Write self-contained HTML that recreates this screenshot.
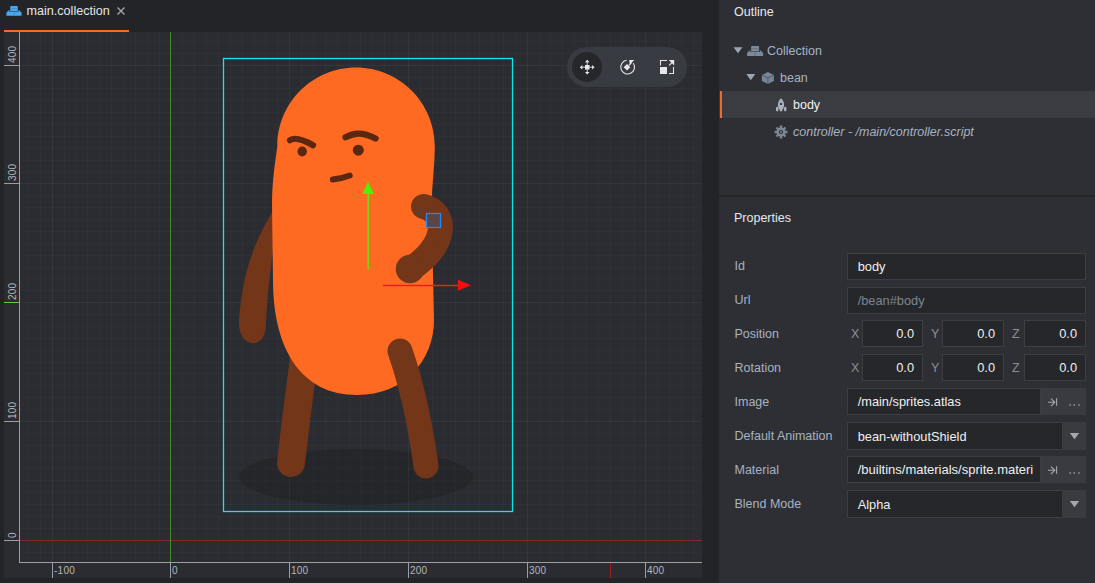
<!DOCTYPE html>
<html><head><meta charset="utf-8">
<style>
*{margin:0;padding:0;box-sizing:border-box}
html,body{width:1095px;height:583px;overflow:hidden;background:#222428;font-family:"Liberation Sans",sans-serif;}
.abs{position:absolute}
svg text.rt{font-family:"Liberation Sans",sans-serif;font-size:10px;letter-spacing:0.25px;fill:#b4b6ba}
.t{position:absolute;white-space:nowrap;font-size:12.5px;line-height:16px}
.panel{position:absolute;left:719px;top:0;width:376px;height:583px;background:#2e2f34}
.lbl{color:#a6b3c2}
.field{position:absolute;background:#26272b;border:1px solid #3c3e43}
.fv{position:absolute;white-space:nowrap;font-size:12.8px;color:#efefef;line-height:16px}
.btn{position:absolute;background:#393b40}
</style></head><body>
<svg class="abs" style="left:0;top:0" width="1095" height="583" viewBox="0 0 1095 583">
<rect x="4" y="32" width="698" height="546" fill="#2b2c31"/>
<rect x="28" y="32" width="1" height="530" fill="#fff" fill-opacity="0.02"/>
<rect x="40" y="32" width="1" height="530" fill="#fff" fill-opacity="0.02"/>
<rect x="52" y="32" width="1" height="530" fill="#fff" fill-opacity="0.052"/>
<rect x="64" y="32" width="1" height="530" fill="#fff" fill-opacity="0.02"/>
<rect x="75" y="32" width="1" height="530" fill="#fff" fill-opacity="0.02"/>
<rect x="87" y="32" width="1" height="530" fill="#fff" fill-opacity="0.02"/>
<rect x="99" y="32" width="1" height="530" fill="#fff" fill-opacity="0.02"/>
<rect x="111" y="32" width="1" height="530" fill="#fff" fill-opacity="0.02"/>
<rect x="123" y="32" width="1" height="530" fill="#fff" fill-opacity="0.02"/>
<rect x="135" y="32" width="1" height="530" fill="#fff" fill-opacity="0.02"/>
<rect x="147" y="32" width="1" height="530" fill="#fff" fill-opacity="0.02"/>
<rect x="159" y="32" width="1" height="530" fill="#fff" fill-opacity="0.02"/>
<rect x="170" y="32" width="1" height="530" fill="#fff" fill-opacity="0.052"/>
<rect x="182" y="32" width="1" height="530" fill="#fff" fill-opacity="0.02"/>
<rect x="194" y="32" width="1" height="530" fill="#fff" fill-opacity="0.02"/>
<rect x="206" y="32" width="1" height="530" fill="#fff" fill-opacity="0.02"/>
<rect x="218" y="32" width="1" height="530" fill="#fff" fill-opacity="0.02"/>
<rect x="230" y="32" width="1" height="530" fill="#fff" fill-opacity="0.02"/>
<rect x="242" y="32" width="1" height="530" fill="#fff" fill-opacity="0.02"/>
<rect x="254" y="32" width="1" height="530" fill="#fff" fill-opacity="0.02"/>
<rect x="265" y="32" width="1" height="530" fill="#fff" fill-opacity="0.02"/>
<rect x="277" y="32" width="1" height="530" fill="#fff" fill-opacity="0.02"/>
<rect x="289" y="32" width="1" height="530" fill="#fff" fill-opacity="0.052"/>
<rect x="301" y="32" width="1" height="530" fill="#fff" fill-opacity="0.02"/>
<rect x="313" y="32" width="1" height="530" fill="#fff" fill-opacity="0.02"/>
<rect x="325" y="32" width="1" height="530" fill="#fff" fill-opacity="0.02"/>
<rect x="337" y="32" width="1" height="530" fill="#fff" fill-opacity="0.02"/>
<rect x="349" y="32" width="1" height="530" fill="#fff" fill-opacity="0.02"/>
<rect x="360" y="32" width="1" height="530" fill="#fff" fill-opacity="0.02"/>
<rect x="372" y="32" width="1" height="530" fill="#fff" fill-opacity="0.02"/>
<rect x="384" y="32" width="1" height="530" fill="#fff" fill-opacity="0.02"/>
<rect x="396" y="32" width="1" height="530" fill="#fff" fill-opacity="0.02"/>
<rect x="408" y="32" width="1" height="530" fill="#fff" fill-opacity="0.052"/>
<rect x="420" y="32" width="1" height="530" fill="#fff" fill-opacity="0.02"/>
<rect x="432" y="32" width="1" height="530" fill="#fff" fill-opacity="0.02"/>
<rect x="444" y="32" width="1" height="530" fill="#fff" fill-opacity="0.02"/>
<rect x="455" y="32" width="1" height="530" fill="#fff" fill-opacity="0.02"/>
<rect x="467" y="32" width="1" height="530" fill="#fff" fill-opacity="0.02"/>
<rect x="479" y="32" width="1" height="530" fill="#fff" fill-opacity="0.02"/>
<rect x="491" y="32" width="1" height="530" fill="#fff" fill-opacity="0.02"/>
<rect x="503" y="32" width="1" height="530" fill="#fff" fill-opacity="0.02"/>
<rect x="515" y="32" width="1" height="530" fill="#fff" fill-opacity="0.02"/>
<rect x="527" y="32" width="1" height="530" fill="#fff" fill-opacity="0.052"/>
<rect x="539" y="32" width="1" height="530" fill="#fff" fill-opacity="0.02"/>
<rect x="550" y="32" width="1" height="530" fill="#fff" fill-opacity="0.02"/>
<rect x="562" y="32" width="1" height="530" fill="#fff" fill-opacity="0.02"/>
<rect x="574" y="32" width="1" height="530" fill="#fff" fill-opacity="0.02"/>
<rect x="586" y="32" width="1" height="530" fill="#fff" fill-opacity="0.02"/>
<rect x="598" y="32" width="1" height="530" fill="#fff" fill-opacity="0.02"/>
<rect x="610" y="32" width="1" height="530" fill="#fff" fill-opacity="0.02"/>
<rect x="622" y="32" width="1" height="530" fill="#fff" fill-opacity="0.02"/>
<rect x="634" y="32" width="1" height="530" fill="#fff" fill-opacity="0.02"/>
<rect x="645" y="32" width="1" height="530" fill="#fff" fill-opacity="0.052"/>
<rect x="657" y="32" width="1" height="530" fill="#fff" fill-opacity="0.02"/>
<rect x="669" y="32" width="1" height="530" fill="#fff" fill-opacity="0.02"/>
<rect x="681" y="32" width="1" height="530" fill="#fff" fill-opacity="0.02"/>
<rect x="693" y="32" width="1" height="530" fill="#fff" fill-opacity="0.02"/>
<rect x="19" y="552" width="683" height="1" fill="#fff" fill-opacity="0.02"/>
<rect x="19" y="540" width="683" height="1" fill="#fff" fill-opacity="0.052"/>
<rect x="19" y="528" width="683" height="1" fill="#fff" fill-opacity="0.02"/>
<rect x="19" y="516" width="683" height="1" fill="#fff" fill-opacity="0.02"/>
<rect x="19" y="504" width="683" height="1" fill="#fff" fill-opacity="0.02"/>
<rect x="19" y="492" width="683" height="1" fill="#fff" fill-opacity="0.02"/>
<rect x="19" y="480" width="683" height="1" fill="#fff" fill-opacity="0.02"/>
<rect x="19" y="468" width="683" height="1" fill="#fff" fill-opacity="0.02"/>
<rect x="19" y="457" width="683" height="1" fill="#fff" fill-opacity="0.02"/>
<rect x="19" y="445" width="683" height="1" fill="#fff" fill-opacity="0.02"/>
<rect x="19" y="433" width="683" height="1" fill="#fff" fill-opacity="0.02"/>
<rect x="19" y="421" width="683" height="1" fill="#fff" fill-opacity="0.052"/>
<rect x="19" y="409" width="683" height="1" fill="#fff" fill-opacity="0.02"/>
<rect x="19" y="397" width="683" height="1" fill="#fff" fill-opacity="0.02"/>
<rect x="19" y="385" width="683" height="1" fill="#fff" fill-opacity="0.02"/>
<rect x="19" y="373" width="683" height="1" fill="#fff" fill-opacity="0.02"/>
<rect x="19" y="362" width="683" height="1" fill="#fff" fill-opacity="0.02"/>
<rect x="19" y="350" width="683" height="1" fill="#fff" fill-opacity="0.02"/>
<rect x="19" y="338" width="683" height="1" fill="#fff" fill-opacity="0.02"/>
<rect x="19" y="326" width="683" height="1" fill="#fff" fill-opacity="0.02"/>
<rect x="19" y="314" width="683" height="1" fill="#fff" fill-opacity="0.02"/>
<rect x="19" y="302" width="683" height="1" fill="#fff" fill-opacity="0.052"/>
<rect x="19" y="290" width="683" height="1" fill="#fff" fill-opacity="0.02"/>
<rect x="19" y="278" width="683" height="1" fill="#fff" fill-opacity="0.02"/>
<rect x="19" y="267" width="683" height="1" fill="#fff" fill-opacity="0.02"/>
<rect x="19" y="255" width="683" height="1" fill="#fff" fill-opacity="0.02"/>
<rect x="19" y="243" width="683" height="1" fill="#fff" fill-opacity="0.02"/>
<rect x="19" y="231" width="683" height="1" fill="#fff" fill-opacity="0.02"/>
<rect x="19" y="219" width="683" height="1" fill="#fff" fill-opacity="0.02"/>
<rect x="19" y="207" width="683" height="1" fill="#fff" fill-opacity="0.02"/>
<rect x="19" y="195" width="683" height="1" fill="#fff" fill-opacity="0.02"/>
<rect x="19" y="183" width="683" height="1" fill="#fff" fill-opacity="0.052"/>
<rect x="19" y="172" width="683" height="1" fill="#fff" fill-opacity="0.02"/>
<rect x="19" y="160" width="683" height="1" fill="#fff" fill-opacity="0.02"/>
<rect x="19" y="148" width="683" height="1" fill="#fff" fill-opacity="0.02"/>
<rect x="19" y="136" width="683" height="1" fill="#fff" fill-opacity="0.02"/>
<rect x="19" y="124" width="683" height="1" fill="#fff" fill-opacity="0.02"/>
<rect x="19" y="112" width="683" height="1" fill="#fff" fill-opacity="0.02"/>
<rect x="19" y="100" width="683" height="1" fill="#fff" fill-opacity="0.02"/>
<rect x="19" y="88" width="683" height="1" fill="#fff" fill-opacity="0.02"/>
<rect x="19" y="77" width="683" height="1" fill="#fff" fill-opacity="0.02"/>
<rect x="19" y="65" width="683" height="1" fill="#fff" fill-opacity="0.052"/>
<rect x="19" y="53" width="683" height="1" fill="#fff" fill-opacity="0.02"/>
<rect x="19" y="41" width="683" height="1" fill="#fff" fill-opacity="0.02"/>
<rect x="20" y="540" width="682" height="1" fill="#8a2626"/>
<rect x="170" y="32" width="1" height="530" fill="#3f8c2c"/>
<rect x="19" y="32" width="1" height="531" fill="#9c9ea2"/>
<rect x="19" y="562" width="683" height="1" fill="#9c9ea2"/>
<rect x="52" y="562" width="1" height="16" fill="#9c9ea2"/>
<text x="54" y="574" class="rt">-100</text>
<rect x="170" y="562" width="1" height="16" fill="#9c9ea2"/>
<text x="172" y="574" class="rt">0</text>
<rect x="289" y="562" width="1" height="16" fill="#9c9ea2"/>
<text x="291" y="574" class="rt">100</text>
<rect x="408" y="562" width="1" height="16" fill="#9c9ea2"/>
<text x="410" y="574" class="rt">200</text>
<rect x="527" y="562" width="1" height="16" fill="#9c9ea2"/>
<text x="529" y="574" class="rt">300</text>
<rect x="645" y="562" width="1" height="16" fill="#9c9ea2"/>
<text x="647" y="574" class="rt">400</text>
<rect x="4" y="540" width="15" height="1" fill="#9c9ea2"/>
<text transform="translate(16,538) rotate(-90)" class="rt">0</text>
<rect x="4" y="421" width="15" height="1" fill="#9c9ea2"/>
<text transform="translate(16,419) rotate(-90)" class="rt">100</text>
<rect x="4" y="302" width="15" height="1" fill="#5fcf3f"/>
<text transform="translate(16,300) rotate(-90)" class="rt">200</text>
<rect x="4" y="183" width="15" height="1" fill="#9c9ea2"/>
<text transform="translate(16,181) rotate(-90)" class="rt">300</text>
<rect x="4" y="65" width="15" height="1" fill="#9c9ea2"/>
<text transform="translate(16,63) rotate(-90)" class="rt">400</text>
<rect x="610" y="563" width="1" height="15" fill="#9a1e1e"/>
<g>

<ellipse cx="356" cy="477" rx="117" ry="28" fill="#000" fill-opacity="0.13"/>
<path d="M273 211 C259 234 243 265 239 320 C238 338 248 343 253 343 C262 343 266 335 266 322 C267 300 270 275 273 250 Z" fill="#733619"/>
<path d="M305 352 Q297 410 291 463" stroke="#733619" stroke-width="28" stroke-linecap="round" fill="none"/>
<path d="M273 280 L272 205 C272 180 275.5 160 277.4 146 C277.4 102.6 312.6 67.4 356 67.4 C399.4 67.4 434.8 102.6 434.8 146 C434.8 165 432 185 431.5 205 L434 320 C434 360 405 395 357 395 C302 395 273 350 273 280 Z" fill="#fe6a22"/>
<path d="M290 140.2 C294 137.5 301 138.5 313 145.2" stroke="#5b2711" stroke-width="6.2" stroke-linecap="round" fill="none"/>
<path d="M345.5 137.3 C353 133.5 361 131 375.5 138.5" stroke="#5b2711" stroke-width="6.2" stroke-linecap="round" fill="none"/>
<ellipse cx="302.2" cy="151.5" rx="4.7" ry="5" fill="#5b2711"/>
<circle cx="358.3" cy="150.2" r="5.5" fill="#5b2711"/>
<path d="M332.8 179.4 Q342 178.5 349.7 175.5" stroke="#5b2711" stroke-width="6" stroke-linecap="round" fill="none"/>
<path d="M400 351 Q417 400 426 466" stroke="#733619" stroke-width="25" stroke-linecap="round" fill="none"/>
<path d="M423.5 206.5 C447 212 449 244 410 269.5" stroke="#733619" stroke-width="25" stroke-linecap="round" fill="none"/>
<path d="M440 240 L420 264 L403 262 Z" fill="#733619"/>
<circle cx="410" cy="269" r="14.3" fill="#733619"/>

</g>

<rect x="223.5" y="58.5" width="289" height="453" fill="none" stroke="#10e8e8" stroke-width="1.3"/>
<line x1="368.2" y1="194" x2="368.2" y2="269.5" stroke="#7ad81a" stroke-width="1.5"/>
<path d="M368 181.5 L373.9 194 L362.4 194 Z" fill="#4cf000"/>
<line x1="383" y1="285.4" x2="458" y2="285.4" stroke="#ee1c1c" stroke-width="1.5"/>
<path d="M471.2 285.2 L457.8 279.4 L457.8 290.8 Z" fill="#f01010"/>
<rect x="426.5" y="213.5" width="14" height="14" fill="#5c4444" stroke="#1a8cff" stroke-width="1.3"/>


<rect x="567" y="47" width="120" height="40" rx="20" fill="#393b42"/>
<circle cx="587" cy="67" r="15" fill="#25272b"/>
<g fill="#e8e8ea" stroke="#e8e8ea">
 <rect x="585" y="65" width="4.5" height="4.5" stroke="none"/>
 <path d="M587.2 62 V72.5 M582 67.2 H592.5" stroke-width="0.9" fill="none"/>
 <path d="M587.2 59.8 L589.5 62.3 H585 Z M587.2 74.5 L589.5 72 H585 Z M579.8 67.2 L582.3 64.9 V69.5 Z M594.6 67.2 L592.1 64.9 V69.5 Z" stroke="none"/>
</g>
<g fill="#e8e8ea" stroke="#e8e8ea">
 <path d="M626.6 60.3 A6.9 6.9 0 1 0 633.3 63.2" fill="none" stroke-width="1.1"/>
 <path d="M627 63.9 L630.3 67.2 L627 70.5 L623.7 67.2 Z" stroke="none"/>
 <path d="M628.6 65.6 L631.6 62.6" stroke-width="1.1"/>
 <path d="M629.2 60 H634.3 L629.8 64.6 Z" stroke="none"/>
</g>
<g fill="#e8e8ea" stroke="#e8e8ea">
 <rect x="660" y="67" width="7" height="7" stroke="none"/>
 <path d="M660.5 65.5 V60.5 H667 M673.5 67 V73.5 H669" fill="none" stroke-width="1.05"/>
 <path d="M669.2 65.3 L672 62.5" stroke-width="1.1"/>
 <path d="M668.8 60 H674.2 V65.4 Z" stroke="none"/>
</g>

<!-- tab -->
<rect x="4" y="30" width="125" height="2" fill="#f26a2a"/>
<g transform="translate(6.4 5.9) scale(0.95 0.98)">
  <path d="M4 1 Q4 0 5 0 H11 Q12 0 12 1 V5.3 H4 Z" fill="#4aa6ee"/>
  <rect x="4" y="2.5" width="8" height="0.8" fill="#3a88c8"/>
  <path d="M0 10 V6.9 L3 3.9 V5.8 H13 V3.9 L16 6.9 V10 Z" fill="#4aa6ee"/>
  <rect x="7.7" y="5.8" width="0.8" height="4.2" fill="#3a88c8"/>
 </g>
<path d="M117.5 7.5 L124.5 14.5 M124.5 7.5 L117.5 14.5" stroke="#a2a4a8" stroke-width="1.4"/>
</svg>
<div class="t" style="left:26.5px;top:3px;color:#e4e6ea;font-size:12.6px">main.collection</div>

<div class="panel">
<div class="t" style="left:15px;top:4px;color:#e6e8ec">Outline</div>
<!-- tree -->
<div class="abs" style="left:0;top:91px;width:376px;height:27px;background:#3a3c41"></div>
<div class="abs" style="left:1px;top:91px;width:2px;height:27px;background:#f0682a"></div>
<svg class="abs" style="left:0;top:0" width="376" height="195" viewBox="719 0 376 195">
 <path d="M733.5 47.3 H742.5 L738 53.3 Z" fill="#9ca6b2"/>
 <path d="M746.3 74.1 H755.3 L750.8 80.3 Z" fill="#9ca6b2"/>
 <g transform="translate(747.1 46)">
  <path d="M4 1 Q4 0 5 0 H11 Q12 0 12 1 V5.3 H4 Z" fill="#7b8a9a"/>
  <rect x="4" y="2.4" width="8" height="0.7" fill="#5d6a78"/>
  <path d="M0 10 V6.9 L3 3.9 V5.8 H13 V3.9 L16 6.9 V10 Z" fill="#7b8a9a"/>
  <rect x="7.7" y="5.8" width="0.7" height="4.2" fill="#5d6a78"/>
 </g>
 <g>
  <path d="M767.9 71.9 L773.9 75 V81 L767.9 84.1 L761.9 81 V75 Z" fill="#778595"/>
  <path d="M761.9 75 L767.9 78 L773.9 75 M767.9 78 V84.1" stroke="#485360" stroke-width="0.9" fill="none"/>
 </g>
 <g fill="#a9b3c0">
  <path d="M781 98.2 C783.5 100.5 784.2 103 784 105.5 C783.8 107.5 783 109 782.3 110 H779.7 C779 109 778.2 107.5 778 105.5 C777.8 103 778.5 100.5 781 98.2 Z"/>
  <circle cx="781" cy="103.9" r="1.2" fill="#3a3c41"/>
  <ellipse cx="777.2" cy="109" rx="1.3" ry="2.5"/>
  <ellipse cx="785.2" cy="109" rx="1.3" ry="2.5"/>
  <ellipse cx="781" cy="110.4" rx="1.2" ry="1"/>
 </g>
 <g fill="#7b8796">
  <circle cx="781" cy="132" r="4.6"/>
  <g stroke="#7b8796" stroke-width="2.4">
   <path d="M781 125.6 V138.4 M774.6 132 H787.4 M776.5 127.5 L785.5 136.5 M785.5 127.5 L776.5 136.5"/>
  </g>
  <circle cx="781" cy="132" r="2.1" fill="#2e2f34"/>
  <circle cx="781" cy="132" r="1" fill="#7b8796"/>
 </g>
</svg>
<div class="t lbl" style="left:48px;top:43px">Collection</div>
<div class="t lbl" style="left:61px;top:70px">bean</div>
<div class="t" style="left:74px;top:97px;color:#f0f0f0">body</div>
<div class="t lbl" style="left:74px;top:124px;font-style:italic">controller - /main/controller.script</div>
<!-- divider -->
<div class="abs" style="left:0;top:195px;width:376px;height:2px;background:#232529"></div>
<div class="t" style="left:15px;top:210px;color:#e6e8ec">Properties</div>
<!-- property rows -->
<div class="t lbl" style="left:15.5px;top:258px">Id</div>
<div class="field" style="left:128px;top:253px;width:239px;height:27px"></div>
<div class="fv" style="left:138.7px;top:259px">body</div>
<div class="t lbl" style="left:15.5px;top:292px">Url</div>
<div class="field" style="left:128px;top:287px;width:239px;height:27px"></div>
<div class="fv" style="left:138.7px;top:293px;color:#7c8591">/bean#body</div>

<div class="t lbl" style="left:15.5px;top:326px">Position</div>
<div class="t" style="left:132px;top:326px;color:#8a8f96">X</div>
<div class="field" style="left:143px;top:320px;width:61px;height:27px"></div>
<div class="fv" style="left:143px;top:326px;width:52px;text-align:right">0.0</div>
<div class="t" style="left:212px;top:326px;color:#8a8f96">Y</div>
<div class="field" style="left:223px;top:320px;width:62px;height:27px"></div>
<div class="fv" style="left:223px;top:326px;width:53px;text-align:right">0.0</div>
<div class="t" style="left:293px;top:326px;color:#8a8f96">Z</div>
<div class="field" style="left:305px;top:320px;width:62px;height:27px"></div>
<div class="fv" style="left:305px;top:326px;width:53px;text-align:right">0.0</div>

<div class="t lbl" style="left:15.5px;top:360px">Rotation</div>
<div class="t" style="left:132px;top:360px;color:#8a8f96">X</div>
<div class="field" style="left:143px;top:354px;width:61px;height:27px"></div>
<div class="fv" style="left:143px;top:360px;width:52px;text-align:right">0.0</div>
<div class="t" style="left:212px;top:360px;color:#8a8f96">Y</div>
<div class="field" style="left:223px;top:354px;width:62px;height:27px"></div>
<div class="fv" style="left:223px;top:360px;width:53px;text-align:right">0.0</div>
<div class="t" style="left:293px;top:360px;color:#8a8f96">Z</div>
<div class="field" style="left:305px;top:354px;width:62px;height:27px"></div>
<div class="fv" style="left:305px;top:360px;width:53px;text-align:right">0.0</div>

<div class="t lbl" style="left:15.5px;top:394px">Image</div>
<div class="field" style="left:128px;top:388px;width:194px;height:27px"></div>
<div class="btn" style="left:322px;top:388px;width:45px;height:27px"></div>
<div class="fv" style="left:138.7px;top:394px">/main/sprites.atlas</div>

<div class="t lbl" style="left:15.5px;top:428px">Default Animation</div>
<div class="field" style="left:128px;top:422px;width:239px;height:28px"></div>
<div class="btn" style="left:343px;top:422px;width:24px;height:28px"></div>
<div class="fv" style="left:138.7px;top:429px">bean-withoutShield</div>

<div class="t lbl" style="left:15.5px;top:462px">Material</div>
<div class="field" style="left:128px;top:456px;width:194px;height:27px"></div>
<div class="btn" style="left:322px;top:456px;width:45px;height:27px"></div>
<div class="fv" style="left:138.7px;top:462px;font-size:13px">/builtins/materials/sprite.materi</div>

<div class="t lbl" style="left:15.5px;top:496px">Blend Mode</div>
<div class="field" style="left:128px;top:490px;width:239px;height:28px"></div>
<div class="btn" style="left:343px;top:490px;width:24px;height:28px"></div>
<div class="fv" style="left:138.7px;top:497px">Alpha</div>

<svg class="abs" style="left:0;top:0" width="376" height="583" viewBox="719 0 376 583">
 <g stroke="#a4a8ae" stroke-width="1.1" fill="none">
  <path d="M1048 402.3 H1055 M1051 398.6 L1054.8 402.3 L1051 406 M1056.6 398.3 V405.8"/>
  <path d="M1048 470.3 H1055 M1051 466.6 L1054.8 470.3 L1051 474 M1056.6 466.3 V473.8"/>
 </g>
 <g fill="#a4a8ae">
  <rect x="1069.5" y="404.3" width="1.4" height="1.4"/><rect x="1073.6" y="404.3" width="1.4" height="1.4"/><rect x="1078.2" y="404.3" width="1.4" height="1.4"/>
  <rect x="1069.5" y="472.3" width="1.4" height="1.4"/><rect x="1073.6" y="472.3" width="1.4" height="1.4"/><rect x="1078.2" y="472.3" width="1.4" height="1.4"/>
  <path d="M1069.8 433 H1079.2 L1074.5 439.2 Z"/>
  <path d="M1069.8 501 H1079.2 L1074.5 507.2 Z"/>
 </g>
</svg>
</div>
</body></html>
